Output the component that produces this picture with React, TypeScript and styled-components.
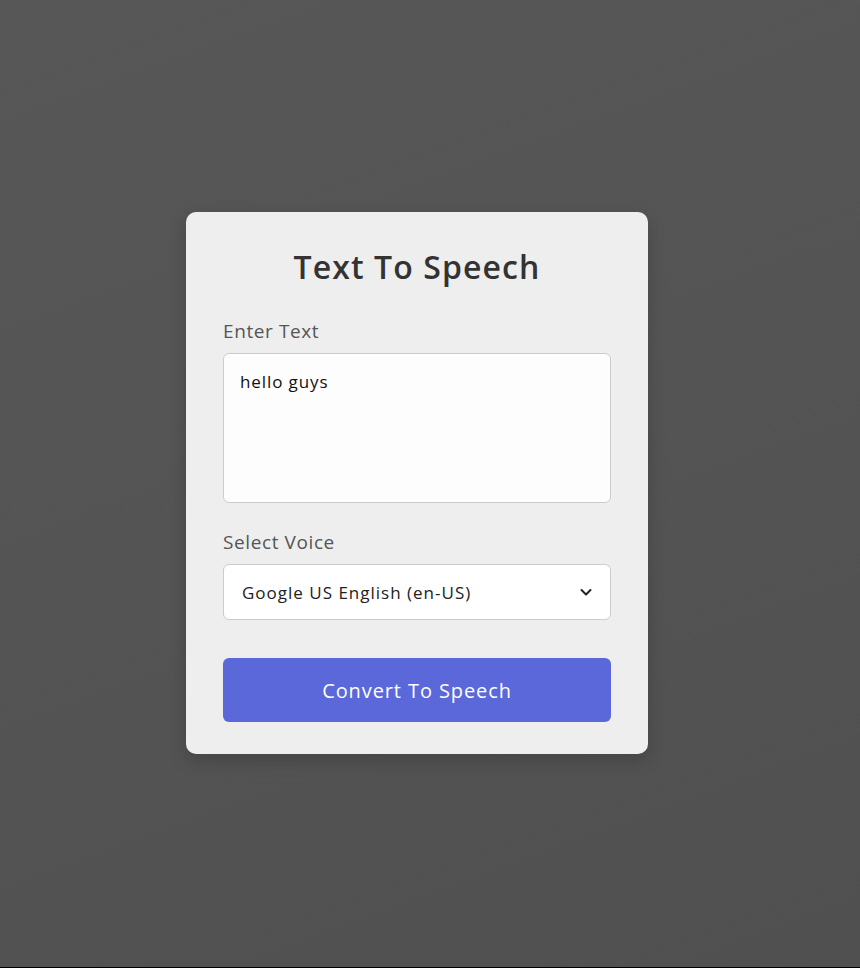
import React, { useState } from "react";
import styled, { createGlobalStyle } from "styled-components";

const GlobalStyle = createGlobalStyle`
  * { box-sizing: border-box; }
  html { background: #000; }
  body {
    margin: 0;
    font-family: "Open Sans", "Noto Sans", sans-serif;
  }
`;

const Page = styled.div`
  min-height: calc(100vh - 1px);
  background: linear-gradient(160deg, #575757 0%, #545454 50%, #505050 100%);
  display: flex;
  align-items: center;
  justify-content: center;
  padding: 0 26px 1px 0;
`;

const Card = styled.div`
  width: 462px;
  background: #eeeeee;
  border-radius: 10px;
  padding: 31px 37px 32px;
  box-shadow: 0 6px 18px rgba(0, 0, 0, 0.18);
  display: flex;
  flex-direction: column;
`;

const Title = styled.h1`
  margin: 0 0 25px;
  text-align: center;
  font-size: 32px;
  line-height: 48px;
  font-weight: 600;
  letter-spacing: 1.1px;
  color: #333333;
`;

const Label = styled.label`
  display: block;
  font-size: 19px;
  line-height: 30px;
  letter-spacing: 0.6px;
  color: #555555;
  margin-bottom: 7px;
`;

const TextArea = styled.textarea`
  display: block;
  width: 100%;
  height: 150px;
  resize: none;
  border: 1px solid #cccccc;
  border-radius: 6px;
  background: #fdfdfd;
  padding: 15px 16px;
  font-family: inherit;
  font-size: 17px;
  line-height: 26px;
  letter-spacing: 0.9px;
  color: #111111;
  outline: none;
  margin-bottom: 24px;
`;

const SelectWrap = styled.div`
  position: relative;
  margin-bottom: 38px;
`;

const Select = styled.select`
  display: block;
  width: 100%;
  height: 56px;
  appearance: none;
  border: 1px solid #cccccc;
  border-radius: 6px;
  background: #ffffff;
  padding: 0 40px 0 18px;
  font-family: inherit;
  font-size: 17px;
  letter-spacing: 1px;
  color: #222222;
  outline: none;
`;

const Chevron = styled.svg`
  position: absolute;
  right: 18px;
  top: 50%;
  transform: translateY(-50%);
  pointer-events: none;
`;

const Button = styled.button`
  width: 100%;
  height: 64px;
  border: none;
  border-radius: 6px;
  background: #5b68d9;
  color: #ffffff;
  font-family: inherit;
  font-size: 20px;
  font-weight: 500;
  letter-spacing: 0.9px;
  cursor: pointer;
`;

export default function App() {
  const [text, setText] = useState("hello guys");
  return (
    <>
      <GlobalStyle />
      <Page>
        <Card>
          <Title>Text To Speech</Title>
          <Label htmlFor="tts-text">Enter Text</Label>
          <TextArea id="tts-text" value={text} onChange={(e) => setText(e.target.value)} />
          <Label htmlFor="tts-voice">Select Voice</Label>
          <SelectWrap>
            <Select id="tts-voice" defaultValue="google-us">
              <option value="google-us">Google US English (en-US)</option>
            </Select>
            <Chevron width="14" height="14" viewBox="0 0 14 14" fill="none">
              <path d="M2.5 5l4.5 4.5L11.5 5" stroke="#222" strokeWidth="2" strokeLinecap="round" strokeLinejoin="round" />
            </Chevron>
          </SelectWrap>
          <Button type="button">Convert To Speech</Button>
        </Card>
      </Page>
    </>
  );
}
